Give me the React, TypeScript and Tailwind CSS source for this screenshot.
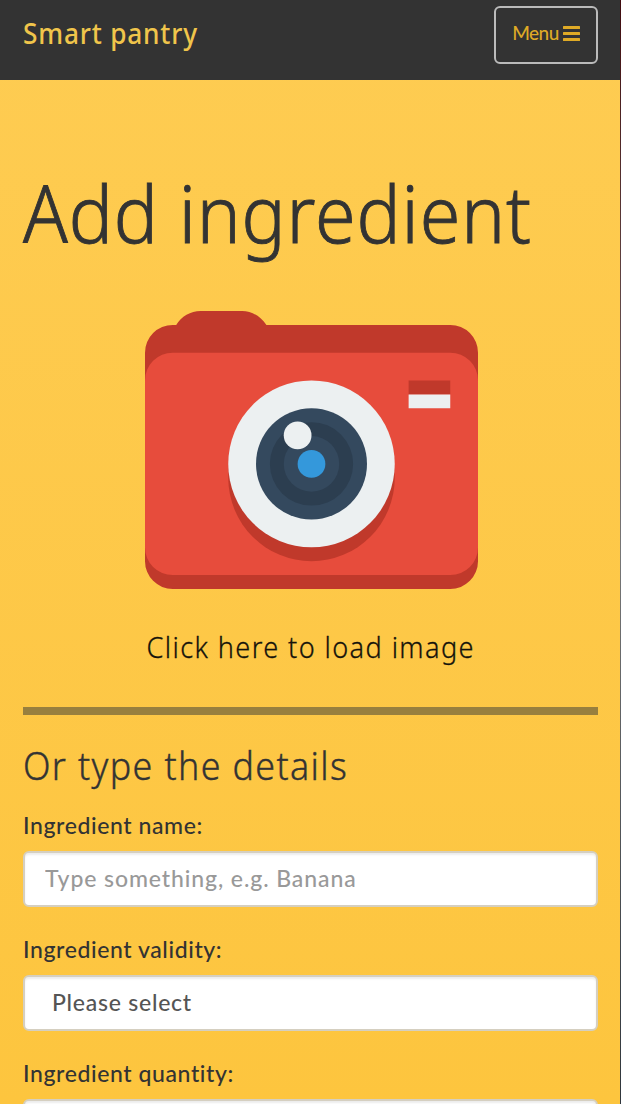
import React from "react";

function Camera() {
  return (
    <svg width="333" height="278" viewBox="0 0 24 20" preserveAspectRatio="none" className="block" aria-hidden="true">
      <path fill="#c0392b" d="M4 0C3.3 0 2.6.4 2.25 1H2a2 2 0 0 0-2 2v15a2 2 0 0 0 2 2h20a2 2 0 0 0 2-2V3a2 2 0 0 0-2-2H8.75C8.35.4 7.7 0 7 0Z" />
      <rect y="3" width="24" height="16" rx="2" fill="#e74c3c" />
      <circle cx="12" cy="12" r="6" fill="#c0392b" />
      <circle cx="12" cy="11" r="6" fill="#ecf0f1" />
      <circle cx="12" cy="11" r="4" fill="#34495e" />
      <circle cx="12" cy="11" r="3" fill="#2c3e50" />
      <circle cx="12" cy="11" r="2" fill="#34495e" />
      <circle cx="12" cy="11" r="1" fill="#3498db" />
      <circle cx="11" cy="8.95" r="1" fill="#ecf0f1" />
      <path fill="#c0392b" d="M19 5h3v1h-3z" />
      <path fill="#ecf0f1" d="M19 6h3v1h-3z" />
    </svg>
  );
}

function Field({ label, children }: { label: string; children?: React.ReactNode }) {
  return (
    <div className="mb-[25px]">
      <div className="mb-[9px] h-[34px] text-[23px] leading-[34px] font-medium tracking-[0.6px] whitespace-nowrap text-[#333333]">
        {label}
      </div>
      <div className="h-14 rounded-[6px] border-2 border-[#d5cfc0] bg-white shadow-[inset_0_2px_2px_rgba(0,0,0,0.075)]">
        {children}
      </div>
    </div>
  );
}

export default function App() {
  return (
    <div className="flex h-[1104px] w-[621px] overflow-hidden font-['Lato',sans-serif]">
      <div className="flex w-[620px] flex-col bg-linear-to-b from-[#fecc52] to-[#fdc53e]">
        <header className="flex h-20 shrink-0 items-start justify-between bg-[#333333] pt-1.5 pr-[22px] pl-[23px]">
          <div className="h-[54px] origin-left scale-x-[0.905] font-['Noto_Sans',sans-serif] text-[29px] leading-[54px] font-medium tracking-[0.9px] whitespace-nowrap text-[#f0c54b]">
            Smart pantry
          </div>
          <button className="flex h-[58px] w-[104px] items-center justify-center gap-1 rounded-[6px] border-2 border-[#bbbbbb] pb-[3px] text-[19px] tracking-[-0.5px] text-[#dfaa26]">
            <span className="font-medium">Menu</span>
            <svg width="17" height="15" viewBox="0 0 18 15" preserveAspectRatio="none" fill="currentColor" aria-hidden="true">
              <rect width="18" height="3" rx="0.5" />
              <rect y="6" width="18" height="3" rx="0.5" />
              <rect y="12" width="18" height="3" rx="0.5" />
            </svg>
          </button>
        </header>
        <main className="pt-[88px] pr-[22px] pl-[23px]">
          <h1 className="h-[88px] origin-left scale-x-[0.92] font-['Noto_Sans',sans-serif] text-[80px] leading-[88px] font-light tracking-[1px] whitespace-nowrap text-[#333333] [-webkit-text-stroke:0.9px_#333333]">
            Add ingredient
          </h1>
          <div className="mt-[55px] flex flex-col items-center pl-px">
            <Camera />
            <div className="mt-[38px] h-10 scale-x-[0.935] font-['Noto_Sans',sans-serif] text-[29px] leading-10 font-light tracking-[1.5px] whitespace-nowrap text-[#15130b] [-webkit-text-stroke:0.3px_#15130b]">
              Click here to load image
            </div>
          </div>
          <hr className="mt-10 h-2 border-0 bg-[#987f3e]" />
          <h2 className="mt-[25px] mb-[18px] h-[50px] origin-left scale-x-[0.918] font-['Noto_Sans',sans-serif] text-[39px] leading-[50px] font-light tracking-[1.5px] whitespace-nowrap text-[#333333] [-webkit-text-stroke:0.4px_#333333]">
            Or type the details
          </h2>
          <Field label="Ingredient name:">
            <input className="h-full w-full bg-transparent px-5 pb-0.5 text-[23px] font-medium tracking-[0.9px] outline-none placeholder:text-[#999999]" placeholder="Type something, e.g. Banana" />
          </Field>
          <Field label="Ingredient validity:">
            <div className="px-[27px] text-[23px] leading-[50px] font-medium tracking-[0.75px] text-[#555555]">Please select</div>
          </Field>
          <Field label="Ingredient quantity:" />
        </main>
      </div>
      <div className="w-px bg-linear-to-b from-[#400b10] via-[#777777] to-[#30363c]" />
    </div>
  );
}
